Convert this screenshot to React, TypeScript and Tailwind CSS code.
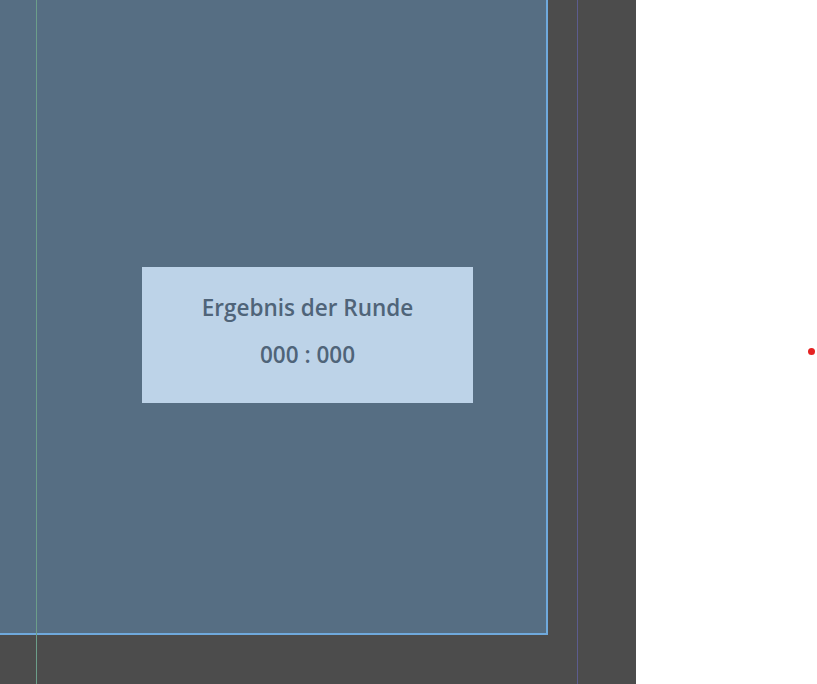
import React from "react";

const App = () => {
  return (
    <div className="flex w-[817px] h-[684px] bg-white font-['Open_Sans',sans-serif]">
      <div className="relative w-[636px] h-[684px] bg-[#4c4c4c] overflow-hidden">
        {/* play field */}
        <div className="w-[548px] h-[635px] bg-[#566e83] border-r-2 border-b-2 border-[#6fa9dc] pl-[142px] pt-[267px]">
          <div className="w-[331px] h-[136px] bg-[#bdd3e8] flex flex-col items-center pt-[26px] text-[#4f6479] font-semibold text-[22.5px]">
            <div className="leading-[30px]">Ergebnis der Runde</div>
            <div className="leading-[30px] mt-[17px]">000 : 000</div>
          </div>
        </div>
        {/* guide lines */}
        <div className="absolute left-[36px] top-0 w-px h-full bg-[#6c9e8a]" />
        <div className="absolute left-[577px] top-0 w-px h-full bg-[#5c5c8e]" />
      </div>
      <div className="flex-1 relative">
        <div className="absolute left-[172px] top-[348px] w-[7px] h-[7px] rounded-full bg-[#e52222]" />
      </div>
    </div>
  );
};

export default App;
